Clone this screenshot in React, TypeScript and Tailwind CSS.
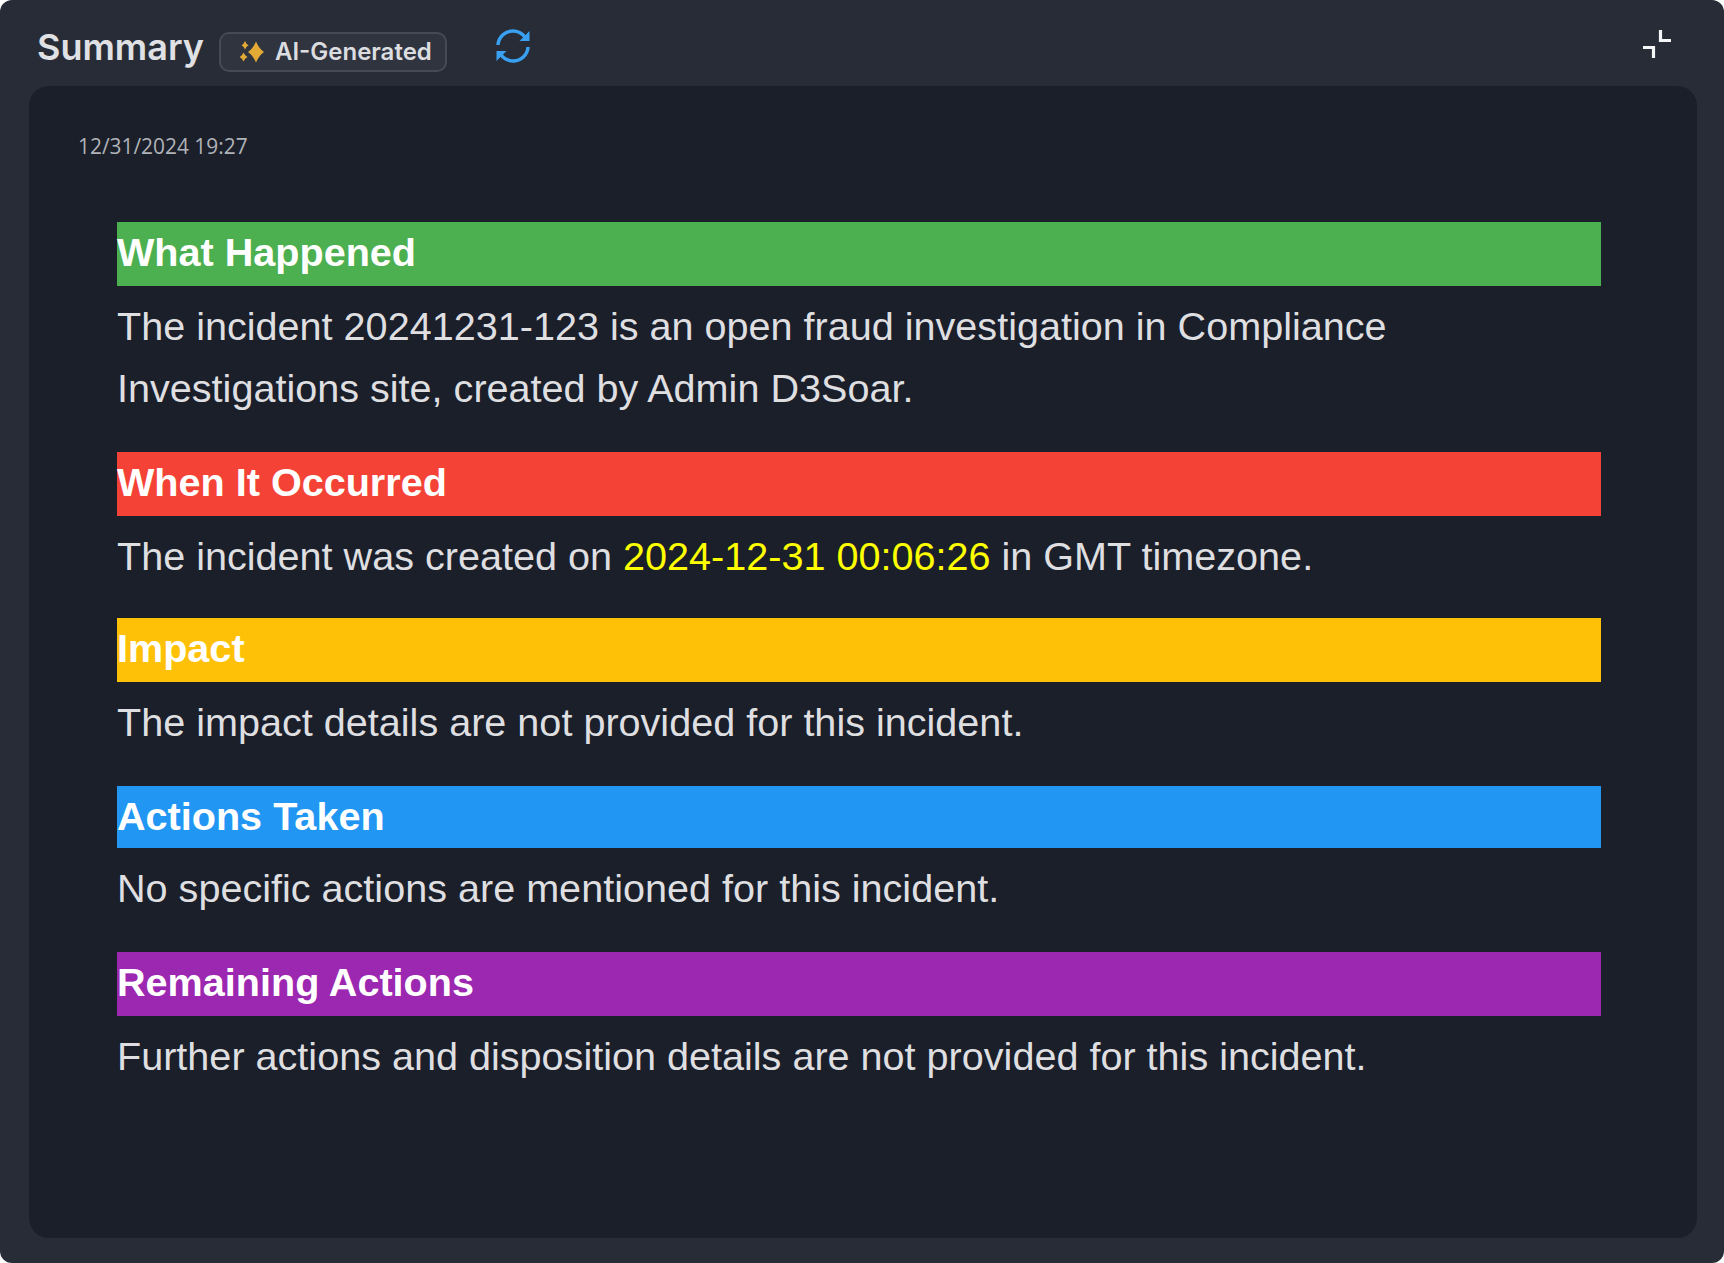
import React from "react";

const sections = [
  { title: "What Happened", color: "bg-[#4caf50]", h: "h-16", mb: "mb-[33px]" },
  { title: "When It Occurred", color: "bg-[#f44336]", h: "h-16", mb: "mb-[30px]" },
  { title: "Impact", color: "bg-[#ffc107]", h: "h-16", mb: "mb-[33px]" },
  { title: "Actions Taken", color: "bg-[#2196f3]", h: "h-[62px]", mb: "mb-[32px]" },
  { title: "Remaining Actions", color: "bg-[#9c27b0]", h: "h-16", mb: "mb-0" },
];

const bodies: React.ReactNode[] = [
  "The incident 20241231-123 is an open fraud investigation in Compliance Investigations site, created by Admin D3Soar.",
  <>
    The incident was created on <span className="text-[#ffff00]">2024-12-31 00:06:26</span> in GMT timezone.
  </>,
  "The impact details are not provided for this incident.",
  "No specific actions are mentioned for this incident.",
  "Further actions and disposition details are not provided for this incident.",
];

const Sparkle = () => (
  <svg width="26" height="24" viewBox="0 0 26 24" fill="#e3ab36">
    <path d="M16 1.500Q19 8.500 24 12Q19 15.500 16 22.500Q13 15.500 8 12Q13 8.500 16 1.500z" />
    <path d="M5 1Q6 4 8.500 5.200Q6 6.400 5 9.400Q4 6.400 1.500 5.200Q4 4 5 1z" />
    <path d="M3.500 12.500Q4.800 15.800 7.500 17Q4.800 18.200 3.500 21.500Q2.200 18.200-.5 17Q2.200 15.800 3.500 12.500z" />
  </svg>
);

const Refresh = () => (
  <svg width="36" height="36" viewBox="0 0 36 36" fill="none" stroke="#3aa0f2" strokeWidth="3.500">
    <path d="M3 17C3.500 9 10 3 18 3c5 0 9 2.300 12 6" />
    <path d="M33 19c-.5 8-7 14-15 14-5 0-9-2.300-12-6" />
    <path d="M34.500 3v10h-10z" fill="#3aa0f2" stroke="none" />
    <path d="M1.500 33v-10h10z" fill="#3aa0f2" stroke="none" />
  </svg>
);

export default function App() {
  return (
    <div className="w-[1724px] h-[1263px] bg-white font-['Liberation_Sans',sans-serif]">
      <div className="h-full rounded-xl bg-[#272c36] flex flex-col pl-[29px] pr-[27px] pb-[25px]">
        <div className="h-[86px] shrink-0 flex items-center relative">
          <span className="ml-2 font-['Inter',sans-serif] font-semibold text-[36px] text-[#e0e1e4] mt-[8px]">Summary</span>
          <div className="ml-[15px] mt-[18px] h-10 w-[228px] rounded-[10px] border-2 border-[#464a54] bg-[#30343e] flex items-center pl-[19px] gap-[9px]">
            <Sparkle />
            <span className="font-['Inter',sans-serif] font-semibold text-[24px] text-[#dcdde0]">AI-Generated</span>
          </div>
          <div className="ml-[48px] mt-[5px]">
            <Refresh />
          </div>
          <svg className="absolute right-[26px] top-[30px]" width="28" height="28" viewBox="0 0 28 28" fill="none" stroke="#f5f6f7" strokeWidth="3.200">
            <path d="M17.500 0v10.500h10.500" />
            <path d="M0 17.500h10.500v10.500" />
          </svg>
        </div>
        <div className="flex-1 rounded-[20px] bg-[#1b1f2a] pt-[46px] pl-[49px]">
          <div className="font-['Open_Sans',sans-serif] text-[20.9px] leading-[28px] text-[#b0b3b8]">12/31/2024 19:27</div>
          <div className="mt-[62px] ml-[39px] mr-[96px]">
            {sections.map((s, i) => (
              <div key={s.title} className={s.mb}>
                <h2 className={`${s.color} ${s.h} text-[39.6px] leading-[60px] font-bold text-white`}>{s.title}</h2>
                <p className="mt-[10px] text-[39.6px] leading-[61.6px] text-[#dfdfe1]">{bodies[i]}</p>
              </div>
            ))}
          </div>
        </div>
      </div>
    </div>
  );
}
